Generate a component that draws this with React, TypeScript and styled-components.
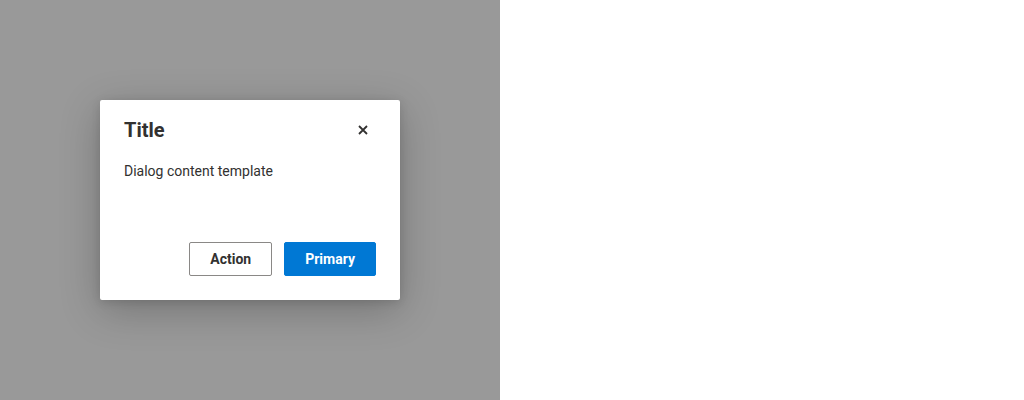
import React from "react";
import styled, { createGlobalStyle } from "styled-components";

const GlobalStyle = createGlobalStyle`
  html, body {
    margin: 0;
    padding: 0;
    background: #ffffff;
    font-family: Roboto, "Liberation Sans", sans-serif;
  }
`;

const Page = styled.div`
  display: flex;
  width: 1024px;
  height: 400px;
`;

const Overlay = styled.div`
  width: 500px;
  height: 400px;
  background: #999999;
  display: flex;
  align-items: center;
  justify-content: center;
`;

const Dialog = styled.div`
  width: 300px;
  height: 200px;
  box-sizing: border-box;
  background: #ffffff;
  border-radius: 2px;
  box-shadow: 0 10px 40px rgba(0, 0, 0, 0.24), 0 2px 10px rgba(0, 0, 0, 0.12);
  padding: 16px 24px 24px;
  display: flex;
  flex-direction: column;
`;

const Header = styled.div`
  display: flex;
  align-items: center;
  justify-content: space-between;
  height: 28px;
`;

const Title = styled.h2`
  margin: 0;
  font-size: 20px;
  font-weight: 700;
  color: #323130;
`;

const CloseButton = styled.button`
  width: 26px;
  height: 26px;
  border: none;
  background: transparent;
  padding: 0;
  display: flex;
  align-items: center;
  justify-content: center;
  color: #323130;
`;

const Body = styled.p`
  margin: 17px 0 0;
  font-size: 14px;
  line-height: 20px;
  color: #323130;
  flex: 1;
`;

const Footer = styled.div`
  display: flex;
  justify-content: flex-end;
  gap: 12px;
`;

const Button = styled.button<{ $primary?: boolean }>`
  height: 34px;
  box-sizing: border-box;
  padding: 0 20px;
  border-radius: 2px;
  font-family: Roboto, "Liberation Sans", sans-serif;
  font-size: 14px;
  font-weight: 700;
  border: 1px solid ${(p) => (p.$primary ? "#0078d4" : "#8a8886")};
  background: ${(p) => (p.$primary ? "#0078d4" : "#ffffff")};
  color: ${(p) => (p.$primary ? "#ffffff" : "#323130")};
`;

const Blank = styled.div`
  flex: 1;
  background: #ffffff;
`;

export default function App() {
  return (
    <>
      <GlobalStyle />
      <Page>
        <Overlay>
          <Dialog>
            <Header>
              <Title>Title</Title>
              <CloseButton aria-label="Close">
                <svg width="10" height="10" viewBox="0 0 10 10">
                  <path d="M1 1 L9 9 M9 1 L1 9" stroke="currentColor" strokeWidth="1.8" />
                </svg>
              </CloseButton>
            </Header>
            <Body>Dialog content template</Body>
            <Footer>
              <Button>Action</Button>
              <Button $primary>Primary</Button>
            </Footer>
          </Dialog>
        </Overlay>
        <Blank />
      </Page>
    </>
  );
}
